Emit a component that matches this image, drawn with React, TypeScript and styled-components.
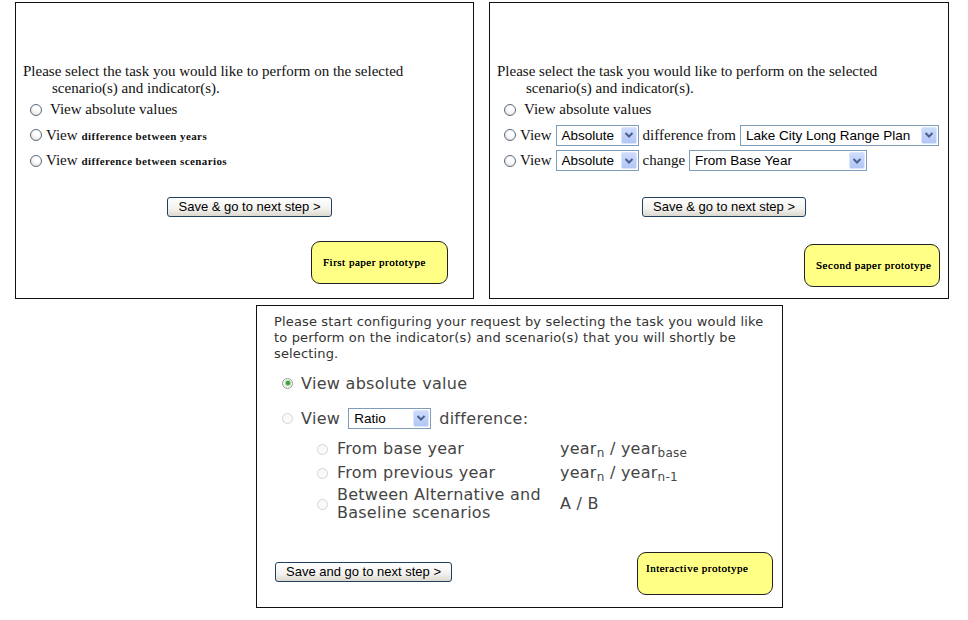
import React from 'react';
import styled, { createGlobalStyle } from 'styled-components';

const GlobalStyle = createGlobalStyle`
  html, body {
    margin: 0;
    padding: 0;
    background: #fff;
  }
  body {
    font-family: "Liberation Serif", "Times New Roman", serif;
    color: #111;
  }
  * {
    box-sizing: border-box;
  }
`;

const Page = styled.div`
  width: 968px;
  height: 620px;
  padding: 2px 0 0 15px;
  display: flex;
  flex-direction: column;
  overflow: hidden;
`;

const TopRow = styled.div`
  display: flex;
  gap: 15px;
`;

// paper prototypes (serif, XP controls)
const PaperPanel = styled.section<{ $w: number }>`
  width: ${(p) => p.$w}px;
  height: 297px;
  border: 1px solid #111;
  padding: 60px 0 0 7px;
  display: flex;
  flex-direction: column;
  font-family: "Liberation Serif", "Times New Roman", serif;
  color: #111;
`;

const Prompt = styled.p`
  margin: 0;
  max-width: 410px;
  font-size: 15px;
  line-height: 17px;
  padding-left: 29px;
  text-indent: -29px;
`;

const PaperOptions = styled.div`
  display: flex;
  flex-direction: column;
  padding-left: 7px;
`;

const PaperRow = styled.div<{ $gap: number }>`
  height: 25.5px;
  display: flex;
  align-items: center;
  gap: ${(p) => p.$gap}px;
  font-size: 15px;
  white-space: nowrap;
`;

const Small = styled.span`
  font-size: 11px;
  font-weight: bold;
  letter-spacing: 0.4px;
  margin-left: 4px;
  padding-top: 2px;
`;

const Radio = styled.span<{ $tone: 'paper' | 'live' | 'off'; $checked?: boolean }>`
  position: relative;
  flex: none;
  width: ${(p) => (p.$tone === 'paper' ? 12 : 11)}px;
  height: ${(p) => (p.$tone === 'paper' ? 12 : 11)}px;
  border-radius: 50%;
  border: 1px solid
    ${(p) => (p.$tone === 'paper' ? '#5b6b7b' : p.$tone === 'live' ? '#9a9a9a' : '#d4d4d4')};
  background: ${(p) =>
    p.$tone === 'paper'
      ? 'radial-gradient(circle at 60% 35%, #fff 30%, #d6d6d6 100%)'
      : p.$tone === 'live'
      ? 'radial-gradient(circle at 60% 35%, #fff 40%, #e4e4e4 100%)'
      : '#fafafa'};

  &::after {
    content: '';
    display: ${(p) => (p.$checked ? 'block' : 'none')};
    position: absolute;
    left: 2.5px;
    top: 2.5px;
    width: 4px;
    height: 4px;
    border-radius: 50%;
    background: #3f9a3f;
    box-shadow: 0 0 1px 1px #8fcf8f;
  }
`;

const Dropdown = styled.div<{ $w: number }>`
  width: ${(p) => p.$w}px;
  height: 21px;
  flex: none;
  border: 1px solid #7f9db9;
  background: #fff;
  display: flex;
  align-items: center;
  justify-content: space-between;
  padding: 0 1px 0 5px;
  font-family: "Liberation Sans", Arial, sans-serif;
  font-size: 13.5px;
  color: #000;
  white-space: nowrap;
  letter-spacing: 0;
`;

const DropArrow = styled.span`
  width: 16px;
  height: 17px;
  border: 1px solid #dbe5fd;
  border-radius: 2px;
  background: linear-gradient(#cddcfd, #b2c6f5);
  display: flex;
  align-items: center;
  justify-content: center;
`;

const ButtonRow = styled.div<{ $mt: number }>`
  display: flex;
  justify-content: center;
  padding-left: 3px;
  margin-top: ${(p) => p.$mt}px;
`;

const StepButton = styled.button<{ $mt?: number }>`
  height: 20px;
  margin-top: ${(p) => p.$mt ?? 0}px;
  padding: 0 10px;
  border: 1px solid #22405f;
  border-radius: 3px;
  background: linear-gradient(#ffffff, #f3f2ee 60%, #dcd8cf);
  font-family: "Liberation Sans", Arial, sans-serif;
  font-size: 13px;
  line-height: 18px;
  letter-spacing: 0;
  color: #000;
  white-space: nowrap;
`;

const NoteRow = styled.div<{ $mt: number; $pr: number }>`
  display: flex;
  justify-content: flex-end;
  margin-top: ${(p) => p.$mt}px;
  padding-right: ${(p) => p.$pr}px;
`;

const Note = styled.div<{ $w: number; $top?: boolean }>`
  width: ${(p) => p.$w}px;
  height: 43px;
  border: 1px solid #222;
  border-radius: 9px;
  background: #ffff85;
  display: flex;
  align-items: ${(p) => (p.$top ? 'flex-start' : 'center')};
  padding: ${(p) => (p.$top ? '9px 0 0 8px' : '0 0 0 11px')};
  font-family: "Liberation Serif", "Times New Roman", serif;
  font-size: 11px;
  letter-spacing: 0.5px;
  color: #000;
  white-space: nowrap;
  text-shadow: 0 0 0.4px #000;
`;

// interactive prototype
const LivePanel = styled.section`
  width: 527px;
  height: 303px;
  margin: 6px 0 0 241px;
  border: 1px solid #111;
  padding: 8px 9px 0 17px;
  display: flex;
  flex-direction: column;
  font-family: "DejaVu Sans", Verdana, sans-serif;
  color: #454545;
`;

const Intro = styled.p`
  margin: 0;
  font-size: 13px;
  line-height: 16px;
  letter-spacing: 0.15px;
  color: #333;
`;

const LiveRow = styled.div<{ $mt: number }>`
  height: 24px;
  margin-top: ${(p) => p.$mt}px;
  padding-left: 8px;
  display: flex;
  align-items: center;
  gap: 8px;
  font-size: 16px;
  letter-spacing: 0.3px;
  white-space: nowrap;
`;

const SubGrid = styled.div`
  margin-top: 7px;
  padding-left: 43px;
  display: grid;
  grid-template-columns: 11px 214px auto;
  grid-template-rows: 24px 24px 38px;
  column-gap: 9px;
  align-items: center;
  font-size: 16px;
  line-height: 18px;
  letter-spacing: 0.25px;
`;

const Sub = styled.sub`
  font-size: 12px;
  line-height: 0;
  vertical-align: -3px;
`;

const BottomRow = styled.div`
  margin-top: 29px;
  padding-left: 1px;
  display: flex;
  justify-content: space-between;
  align-items: flex-start;
`;

const Chevron = () => (
  <svg width="10" height="8" viewBox="0 0 10 8">
    <path d="M1.5 2 L5 5.5 L8.5 2" fill="none" stroke="#4a5f8c" strokeWidth="2" />
  </svg>
);

const Select: React.FC<{ w: number; value: string }> = ({ w, value }) => (
  <Dropdown $w={w}>
    <span>{value}</span>
    <DropArrow>
      <Chevron />
    </DropArrow>
  </Dropdown>
);

const PROMPT = 'Please select the task you would like to perform on the selected scenario(s) and indicator(s).';

const App: React.FC = () => {
  return (
    <>
      <GlobalStyle />
      <Page>
        <TopRow>
          <PaperPanel $w={459}>
            <Prompt>{PROMPT}</Prompt>
            <PaperOptions>
              <PaperRow $gap={8}>
                <Radio $tone="paper" />
                View absolute values
              </PaperRow>
              <PaperRow $gap={4}>
                <Radio $tone="paper" />
                <span>
                  View<Small>difference between years</Small>
                </span>
              </PaperRow>
              <PaperRow $gap={4}>
                <Radio $tone="paper" />
                <span>
                  View<Small>difference between scenarios</Small>
                </span>
              </PaperRow>
            </PaperOptions>
            <ButtonRow $mt={23}>
              <StepButton>Save &amp; go to next step &gt;</StepButton>
            </ButtonRow>
            <NoteRow $mt={24} $pr={25}>
              <Note $w={137}>First paper prototype</Note>
            </NoteRow>
          </PaperPanel>

          <PaperPanel $w={460}>
            <Prompt>{PROMPT}</Prompt>
            <PaperOptions>
              <PaperRow $gap={8}>
                <Radio $tone="paper" />
                View absolute values
              </PaperRow>
              <PaperRow $gap={4}>
                <Radio $tone="paper" />
                View
                <Select w={83} value="Absolute" />
                difference from
                <Select w={199} value="Lake City Long Range Plan" />
              </PaperRow>
              <PaperRow $gap={4}>
                <Radio $tone="paper" />
                View
                <Select w={83} value="Absolute" />
                change
                <Select w={178} value="From Base Year" />
              </PaperRow>
            </PaperOptions>
            <ButtonRow $mt={23}>
              <StepButton>Save &amp; go to next step &gt;</StepButton>
            </ButtonRow>
            <NoteRow $mt={27} $pr={8}>
              <Note $w={136}>Second paper prototype</Note>
            </NoteRow>
          </PaperPanel>
        </TopRow>

        <LivePanel>
          <Intro>
            Please start configuring your request by selecting the task you would like
            <br />
            to perform on the indicator(s) and scenario(s) that you will shortly be
            <br />
            selecting.
          </Intro>
          <LiveRow $mt={9}>
            <Radio $tone="live" $checked />
            View absolute value
          </LiveRow>
          <LiveRow $mt={11}>
            <Radio $tone="off" />
            View
            <Select w={83} value="Ratio" />
            difference:
          </LiveRow>
          <SubGrid>
            <Radio $tone="off" />
            <span>From base year</span>
            <span>
              year<Sub>n</Sub> / year<Sub>base</Sub>
            </span>
            <Radio $tone="off" />
            <span>From previous year</span>
            <span>
              year<Sub>n</Sub> / year<Sub>n-1</Sub>
            </span>
            <Radio $tone="off" />
            <span>
              Between Alternative and
              <br />
              Baseline scenarios
            </span>
            <span>A / B</span>
          </SubGrid>
          <BottomRow>
            <StepButton $mt={10}>Save and go to next step &gt;</StepButton>
            <Note $w={136} $top>
              Interactive prototype
            </Note>
          </BottomRow>
        </LivePanel>
      </Page>
    </>
  );
};

export default App;
